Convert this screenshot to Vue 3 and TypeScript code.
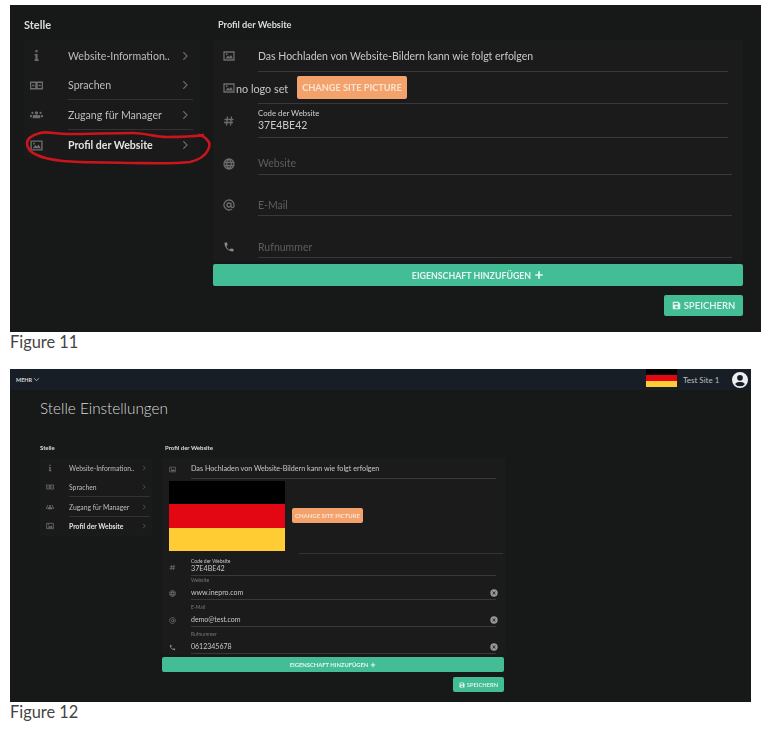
<script setup lang="ts">
import { h } from 'vue'

type IconDef = { f?: string; s?: string }
const icons: Record<string, IconDef> = {
  info: { f: 'M10 2h4v4h-4zM8.500 9H14v10h2v3H8.500v-3H10v-7H8.500z' },
  lang: { s: 'M1 6h10v12H1zM13 6h10v12H13zM4 12h4M16 12h4' },
  users: { f: 'M12 6a3 3 0 1 1 0 6 3 3 0 0 1 0-6zM6.500 13h11c.8 0 1.500.7 1.500 1.500V19H5v-4.500c0-.8.7-1.500 1.500-1.500zM4.500 7a2 2 0 1 1 0 4 2 2 0 0 1 0-4zM19.500 7a2 2 0 1 1 0 4 2 2 0 0 1 0-4zM0 13h3.500v4H0zM20.500 13H24v4h-3.500z' },
  image: { s: 'M2 4h20v16H2z', f: 'M5 17l5-6 3 3 3-4 4 7zM6 7h3v3H6z' },
  hash: { s: 'M9 3L7 21M17 3l-2 18M3 9h18M2 15h18' },
  globe: { s: 'M12 2a10 10 0 1 0 0 20 10 10 0 0 0 0-20zM2 9h20M2 15h20M12 2c-6 6-6 14 0 20M12 2c6 6 6 14 0 20' },
  at: { s: 'M16 12a4 4 0 1 1-8 0 4 4 0 0 1 8 0zM16 8v6a3 3 0 0 0 6 0v-2a10 10 0 1 0-4 8' },
  phone: { f: 'M6.600 10.800c1.400 2.800 3.800 5.100 6.600 6.600l2.200-2.200c.3-.3.7-.4 1-.2 1.100.4 2.300.6 3.600.6.6 0 1 .4 1 1V20c0 .6-.4 1-1 1C10.600 21 3 13.400 3 4c0-.6.4-1 1-1h3.500c.6 0 1 .4 1 1 0 1.300.2 2.500.6 3.600.1.300 0 .7-.2 1z' },
  chevron: { s: 'M8 3l9 9-9 9' },
  down: { s: 'M4 8l8 8 8-8' },
  plus: { f: 'M10 3h4v7h7v4h-7v7h-4v-7H3v-4h7z' },
  save: { f: 'M4 2h13l5 5v13a2 2 0 0 1-2 2H4a2 2 0 0 1-2-2V4a2 2 0 0 1 2-2zm1 3v5h11V5zm7 8a3.500 3.500 0 1 0 0 7 3.500 3.500 0 0 0 0-7z' },
  user: { f: 'M12 0a12 12 0 1 0 0 24 12 12 0 0 0 0-24zm0 4.500a4.300 4.300 0 1 1 0 8.600 4.300 4.300 0 0 1 0-8.600zM12 21.500a9.500 9.500 0 0 1-7.200-3.300c.9-1.900 2.800-3.300 5.200-3.300h4c2.400 0 4.300 1.400 5.200 3.300a9.500 9.500 0 0 1-7.200 3.300z' },
  clear: { f: 'M12 1a11 11 0 1 0 0 22 11 11 0 0 0 0-22zM8.500 7L12 10.500 15.500 7 17 8.500 13.500 12 17 15.500 15.500 17 12 13.500 8.500 17 7 15.500 10.500 12 7 8.500z' },
}

const Icon = (props: { name: string }) => {
  const d = icons[props.name]
  return h('svg', { viewBox: '0 0 24 24', 'aria-hidden': 'true' }, [
    d.f ? h('path', { d: d.f, fill: 'currentColor', 'fill-rule': 'evenodd' }) : null,
    d.s ? h('path', { d: d.s, fill: 'none', stroke: 'currentColor', 'stroke-width': 2.6 }) : null,
  ])
}
Icon.props = ['name']

const menu = [
  { icon: 'info', label: 'Website-Information..', line: false, active: false },
  { icon: 'lang', label: 'Sprachen', line: true, active: false },
  { icon: 'users', label: 'Zugang für Manager', line: true, active: false },
  { icon: 'image', label: 'Profil der Website', line: false, active: true },
]

const fieldsA = [
  { icon: 'globe', label: 'Website', cls: 'web' },
  { icon: 'at', label: 'E-Mail', cls: 'mail' },
  { icon: 'phone', label: 'Rufnummer', cls: 'tel' },
]
const fieldsB = [
  { icon: 'globe', label: 'Website', value: 'www.inepro.com', cls: 'web' },
  { icon: 'at', label: 'E-Mail', value: 'demo@test.com', cls: 'mail' },
  { icon: 'phone', label: 'Rufnummer', value: '0612345678', cls: 'tel' },
]
const intro = 'Das Hochladen von Website-Bildern kann wie folgt erfolgen'
</script>

<template>
  <main class="page">
    <section class="figure fig-a">
      <div class="settings">
        <div class="side">
          <h3 class="head">Stelle</h3>
          <ul class="menu">
            <li v-for="m in menu" :key="m.label" class="item" :class="{ active: m.active }">
              <Icon :name="m.icon" class="item-icon" />
              <span class="item-body" :class="{ line: m.line }">
                <span class="item-label">{{ m.label }}</span>
                <Icon name="chevron" class="chev" />
              </span>
            </li>
          </ul>
        </div>
        <div class="main">
          <h3 class="head main-head">Profil der Website</h3>
          <div class="card">
            <div class="row intro">
              <Icon name="image" class="row-icon" />
              <div class="row-body">{{ intro }}</div>
            </div>
            <div class="logo-row">
              <Icon name="image" class="row-icon small" />
              <span class="no-logo">no logo set</span>
              <button class="orange">CHANGE SITE PICTURE</button>
            </div>
            <div class="row code">
              <Icon name="hash" class="row-icon" />
              <div class="row-body">
                <span class="caption">Code der Website</span>
                <span class="value">37E4BE42</span>
              </div>
            </div>
            <div v-for="f in fieldsA" :key="f.label" class="row" :class="f.cls">
              <Icon :name="f.icon" class="row-icon" />
              <div class="row-body placeholder">{{ f.label }}</div>
            </div>
          </div>
          <button class="green add">EIGENSCHAFT HINZUFÜGEN <Icon name="plus" class="btn-icon" /></button>
          <div class="save-wrap">
            <button class="green save"><Icon name="save" class="btn-icon" /> SPEICHERN</button>
          </div>
        </div>
      </div>
      <svg class="scribble" viewBox="10 5 751 327" aria-hidden="true">
        <path d="M203 135C190 137 178 137 167 137C155 137 145 133 133 133C110 133 90 134 67 134C55 134 47 131 40 133C33 135 27 138 27 143C27 149 32 153 37 155C45 159 54 160 63 161C85 163 110 162 133 163C152 163 172 164 190 162C199 160 205 156 208 150C210 146 210 143 208 141C206 138 203 136 199 135" />
      </svg>
    </section>
    <p class="fig-caption">Figure 11</p>

    <section class="figure fig-b">
      <header class="topbar">
        <span class="more">MEHR <Icon name="down" class="more-icon" /></span>
        <span class="flag bar-flag"><i></i><i></i><i></i></span>
        <span class="site">Test Site 1</span>
        <Icon name="user" class="avatar" />
      </header>
      <h1 class="title">Stelle Einstellungen</h1>
      <div class="settings">
        <div class="side">
          <h3 class="head">Stelle</h3>
          <ul class="menu">
            <li v-for="m in menu" :key="m.label" class="item" :class="{ active: m.active }">
              <Icon :name="m.icon" class="item-icon" />
              <span class="item-body" :class="{ line: m.line }">
                <span class="item-label">{{ m.label }}</span>
                <Icon name="chevron" class="chev" />
              </span>
            </li>
          </ul>
        </div>
        <div class="main">
          <h3 class="head main-head">Profil der Website</h3>
          <div class="card">
            <div class="row intro">
              <Icon name="image" class="row-icon" />
              <div class="row-body">{{ intro }}</div>
            </div>
            <div class="logo-row">
              <span class="flag logo-flag"><i></i><i></i><i></i></span>
              <button class="orange">CHANGE SITE PICTURE</button>
            </div>
            <div class="row code">
              <Icon name="hash" class="row-icon" />
              <div class="row-body">
                <span class="caption">Code der Website</span>
                <span class="value">37E4BE42</span>
              </div>
            </div>
            <div v-for="f in fieldsB" :key="f.label" class="row filled" :class="f.cls">
              <Icon :name="f.icon" class="row-icon" />
              <div class="row-body">
                <span class="caption dim">{{ f.label }}</span>
                <span class="value-line">
                  <span class="value">{{ f.value }}</span>
                  <Icon name="clear" class="clear" />
                </span>
              </div>
            </div>
          </div>
          <button class="green add">EIGENSCHAFT HINZUFÜGEN <Icon name="plus" class="btn-icon" /></button>
          <div class="save-wrap">
            <button class="green save"><Icon name="save" class="btn-icon" /> SPEICHERN</button>
          </div>
        </div>
      </div>
    </section>
    <p class="fig-caption">Figure 12</p>
  </main>
</template>

<style>
html, body { margin: 0; background: #fff; }
</style>

<style scoped>
.page {
  width: 772px;
  height: 731px;
  padding: 5px 0 0 10px;
  box-sizing: border-box;
  font-family: Lato, "Open Sans", sans-serif;
  overflow: hidden;
}
.figure {
  position: relative;
  background: #171818;
  color: #c8c8c8;
  overflow: hidden;
}
.fig-a { width: 751px; height: 327px; }
.fig-b { width: 741px; height: 333px; margin-top: 19px; }
.fig-caption {
  margin: 0;
  height: 18px;
  font-size: 16.400px;
  line-height: 20px;
  color: #444;
}
.fig-a > .settings, .fig-b > .settings { filter: blur(0.3px); }
.settings { display: flex; align-items: flex-start; }
.menu { list-style: none; margin: 0; padding: 0; background: #1a1a1b; }
.item { display: flex; align-items: stretch; color: #bdbdbd; }
.item svg { display: block; flex: none; }
.item-icon { color: #6c6c6c; align-self: center; }
.item-body { flex: 1; min-width: 0; display: flex; align-items: center; justify-content: space-between; }
.item-body.line { border-bottom: 1px solid #333; padding-top: 1px; }
.item.active { color: #e2e2e2; font-weight: 700; }
.chev { color: #6c6c6c; }
.head { margin: 0; font-weight: 700; color: #dcdcdc; }
.card { background: #1b1b1c; }
.row { display: flex; align-items: flex-end; }
.row-icon { display: block; flex: none; color: #6c6c6c; }
.row-body {
  flex: 1;
  min-width: 0;
  display: flex;
  flex-direction: column;
  justify-content: flex-end;
  height: 100%;
  box-sizing: border-box;
  border-bottom: 1px solid #383838;
}
.tel .row-icon { color: #8a8a8a; }
.caption, .value { display: block; }
.placeholder { color: #5e5e5e; }
.logo-row { display: flex; align-items: center; }
button {
  display: block;
  border: 0;
  padding: 0;
  font-family: inherit;
  font-weight: 700;
  color: #eee;
  cursor: pointer;
}
.orange { background: #f4a26c; color: #fbe3d2; border-radius: 2px; }
.green { background: #43bd95; color: #e6f6f0; border-radius: 2px; display: flex; align-items: center; justify-content: center; }
.btn-icon { display: block; flex: none; }
.add { width: 100%; }
.save-wrap { display: flex; justify-content: flex-end; }

/* Figure 11 */
.fig-a .side { width: 176px; margin-left: 14px; margin-right: 13px; }
.fig-a .head { font-size: 11px; line-height: 14px; padding: 13px 0 8px; }
.fig-a .menu { padding-top: 1px; height: 119px; box-sizing: border-box; }
.fig-a .item { height: 29.500px; font-size: 10.600px; }
.fig-a .item.active { padding-top: 1px; }
.fig-a .item-icon { width: 13px; height: 13px; margin: 0 25px 0 6px; }
.fig-a .item-body { margin-right: 7px; }
.fig-a .chev { width: 10px; height: 10px; margin-right: 3px; }
.fig-a .main { width: 530px; }
.fig-a .main-head { font-size: 9.200px; padding-left: 5px; }
.fig-a .card { height: 221px; padding-left: 10px; }
.fig-a .row-icon { width: 12px; height: 12px; margin-right: 23px; }
.fig-a .row-body { margin-right: 15px; font-size: 10.500px; line-height: 14px; padding-bottom: 4px; }
.fig-a .intro { height: 32px; }
.fig-a .intro .row-icon { margin-bottom: 10px; }
.fig-a .intro .row-body { padding-bottom: 8px; }
.fig-a .logo-row {
  height: 32px;
  background: linear-gradient(#383838, #383838) 35px 100% / 470px 1px no-repeat;
}
.fig-a .logo-row .small { margin-right: 1px; }
.fig-a .no-logo { font-size: 10.800px; width: 61px; color: #c8c8c8; }
.fig-a .orange { width: 110px; height: 23px; font-size: 9.200px; margin-top: -2px; }
.fig-a .code { height: 34px; }
.fig-a .code .row-icon { margin-bottom: 11px; }
.fig-a .code .caption { font-size: 7.800px; line-height: 10px; color: #d0d0d0; }
.fig-a .code .row-body { padding-bottom: 5px; }
.fig-a .web { height: 37px; }
.fig-a .mail { height: 41px; }
.fig-a .tel { height: 42px; }
.fig-a .web .row-body, .fig-a .mail .row-body, .fig-a .tel .row-body { margin-right: 11px; }
.fig-a .mail .row-body, .fig-a .tel .row-body { padding-bottom: 3px; }
.fig-a .web .row-icon, .fig-a .mail .row-icon, .fig-a .tel .row-icon { margin-bottom: 5px; }
.fig-a .add { height: 22px; margin-top: 3px; font-size: 8.800px; gap: 3px; }
.fig-a .add .btn-icon { width: 10px; height: 10px; }
.fig-a .save-wrap { margin: 9px 0 0; }
.fig-a .save { width: 79px; height: 21px; font-size: 9.500px; gap: 3px; font-weight: 600; }
.fig-a .save .btn-icon { width: 9px; height: 9px; }
.scribble {
  position: absolute;
  inset: 0;
  width: 751px;
  height: 327px;
  fill: none;
  stroke: #c9151b;
  stroke-width: 2.600;
  stroke-linecap: round;
  pointer-events: none;
}

/* Figure 12 */
.topbar {
  height: 21px;
  background: #171e26;
  display: flex;
  align-items: center;
  font-size: 8px;
  color: #bdbdbd;
}
.more {
  display: flex;
  align-items: center;
  gap: 1px;
  margin-left: 6px;
  margin-right: auto;
  font-size: 5.500px;
  font-weight: 700;
  color: #d8d8d8;
}
.more-icon { width: 7px; height: 7px; display: block; }
.flag { display: flex; flex-direction: column; flex: none; }
.flag i { display: block; flex: 1; }
.flag i:nth-child(1) { background: #000; }
.flag i:nth-child(2) { background: #e30613; }
.flag i:nth-child(3) { background: #ffcc33; }
.bar-flag { width: 31px; height: 18px; align-self: flex-start; }
.site { margin: 0 13px 0 6px; width: 36px; white-space: nowrap; }
.avatar { width: 16px; height: 16px; display: block; margin-right: 3px; color: #efefef; }
.title {
  margin: 0;
  padding: 9px 0 0 30px;
  height: 36px;
  box-sizing: border-box;
  font-size: 15.300px;
  line-height: 18px;
  font-weight: 300;
  color: #dadada;
}
.fig-b .side { width: 112px; margin-left: 30px; margin-right: 10px; }
.fig-b .head { font-size: 6px; line-height: 8px; padding: 18px 0 5px; height: 32px; box-sizing: border-box; }
.fig-b .menu { height: 78px; }
.fig-b .item { height: 19.500px; font-size: 6.800px; }
.fig-b .item-icon { width: 8px; height: 8px; margin: 0 15px 0 6px; }
.fig-b .item-body { margin-right: 2px; }
.fig-b .chev { width: 6px; height: 6px; margin-right: 3px; }
.fig-b .main { width: 343px; }
.fig-b .main-head { padding-left: 3px; }
.fig-b .card { height: 197px; padding-left: 7px; }
.fig-b .row-icon { width: 7px; height: 7px; margin-right: 15px; }
.fig-b .row-body { margin-right: 9px; font-size: 7.200px; line-height: 9px; padding-bottom: 2px; }
.fig-b .intro { height: 21px; }
.fig-b .intro .row-icon { margin-bottom: 6px; }
.fig-b .intro .row-body { padding-bottom: 5px; }
.fig-b .logo-row {
  height: 75px;
  align-items: flex-start;
  background: linear-gradient(#333, #333) 130px 100% / 204px 1px no-repeat;
}
.logo-flag { width: 116px; height: 70px; margin-top: 2px; }
.fig-b .orange { width: 71px; height: 15px; margin: 29px 0 0 7px; font-size: 6px; }
.fig-b .code { height: 22px; }
.fig-b .code .row-icon { margin-bottom: 5px; }
.fig-b .code .caption { font-size: 5px; line-height: 6px; }
.fig-b .filled.web { height: 24px; }
.fig-b .filled.mail { height: 27px; }
.fig-b .filled.tel { height: 27px; }
.fig-b .filled .row-icon { margin-bottom: 3px; }
.fig-b .filled .row-body { padding-bottom: 2px; font-size: 7px; }
.fig-b .caption.dim { font-size: 5px; line-height: 6px; color: #777; margin-bottom: 5px; }
.value-line { display: flex; align-items: center; justify-content: space-between; }
.clear { display: block; width: 8px; height: 8px; margin-right: -2px; color: #9a9a9a; }
.fig-b .add { height: 15px; margin-top: 2px; font-size: 5.800px; gap: 2px; width: 342px; }
.fig-b .add .btn-icon { width: 6px; height: 6px; }
.fig-b .save-wrap { margin: 5px 1px 0 0; }
.fig-b .save { width: 51px; height: 15px; font-size: 5.800px; gap: 2px; font-weight: 600; }
.fig-b .save .btn-icon { width: 6px; height: 6px; }
</style>
